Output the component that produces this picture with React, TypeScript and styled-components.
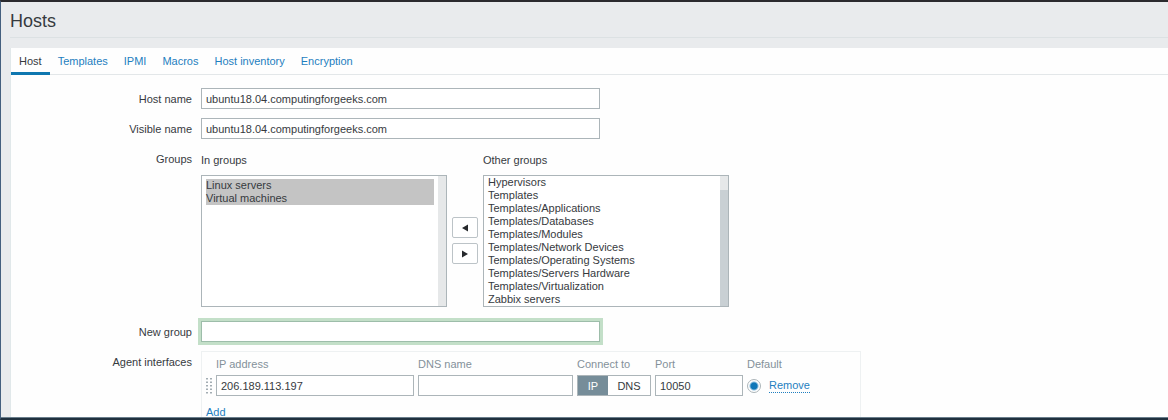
import React from "react";
import styled, { createGlobalStyle } from "styled-components";

const GlobalStyle = createGlobalStyle`
  *, *::before, *::after { box-sizing: border-box; }
  body {
    margin: 0;
    background: #e9ebed;
    color: #363a3e;
    font-family: "Liberation Sans", Arial, sans-serif;
    font-size: 11px;
    line-height: 14px;
  }
  button, input, select { font: inherit; color: inherit; margin: 0; }
`;

const Screen = styled.div`
  display: flex;
  flex-direction: column;
  height: 100vh;
  overflow: hidden;
  border-top: 2px solid #2b2a2e;
  border-left: 1px solid #45607f;
  border-bottom: 2px solid #1f303e;
`;

const Viewport = styled.div`
  flex: 1;
  min-height: 0;
  overflow: hidden;
  padding-left: 9px;
  border-bottom: 1px solid #6a7e8c;
`;

const Header = styled.header`
  padding: 9px 0 6px;
  border-bottom: 1px solid #dce1e3;
  margin-bottom: 10px;
`;

const Title = styled.h1`
  margin: 0;
  font-size: 18px;
  line-height: 20px;
  font-weight: 400;
`;

const Panel = styled.main`
  background: #fefefe;
  border-left: 1px solid #e1e8ea;
`;

const Tabs = styled.nav`
  display: flex;
  border-bottom: 1px solid #e3e7e9;
`;

const Tab = styled.a<{ $active?: boolean }>`
  padding: 6px 8px 4px;
  margin-bottom: -1px;
  border-bottom: 3px solid ${(p) => (p.$active ? "#0f77b0" : "transparent")};
  color: ${(p) => (p.$active ? "#363a3e" : "#1f7fc0")};
  text-decoration: none;
`;

const Form = styled.form`
  display: grid;
  grid-template-columns: 181px minmax(0, 1fr);
  column-gap: 9px;
  row-gap: 9px;
  padding: 13px 0 20px;
`;

const Label = styled.label`
  padding-top: 4px;
  text-align: right;
`;

const TextInput = styled.input<{ $width?: number }>`
  display: block;
  width: ${(p) => p.$width ?? 399}px;
  max-width: 100%;
  height: 21px;
  padding: 0 4px;
  border: 1px solid #acb5b9;
  border-radius: 0;
  background: #fff;
  outline: none;
`;

const FocusedInput = styled(TextInput)`
  border-color: #9dbdaa;
  box-shadow: 0 0 0 3px #c3dfc8;
`;

const Groups = styled.div`
  display: flex;
  gap: 5px;
  padding-bottom: 5px;
`;

const GroupColumn = styled.div`
  display: flex;
  flex-direction: column;
  width: 246px;
`;

const GroupLabel = styled.label`
  padding: 5px 0 8px;
`;

const ListFrame = styled.div`
  display: flex;
  height: 132px;
  border: 1px solid #acb5b9;
  background: #fff;
`;

const ListBox = styled.select<{ $inset: number }>`
  flex: 1;
  min-width: 0;
  padding: ${(p) => p.$inset}px 4px 0;
  border: 0;
  border-radius: 0;
  background: transparent;
  outline: none;
  overflow: hidden;
`;

const Option = styled.option`
  height: 13px;
  min-height: 0;
  padding: 0;
  line-height: 13px;
  &:checked {
    color: #363a3e;
    background: #c4c4c4 linear-gradient(#c4c4c4, #c4c4c4);
  }
`;

const Track = styled.div<{ $thumb?: boolean }>`
  width: 8px;
  padding-top: 14px;
  background: #e6e8e9;
  &::before {
    content: "";
    display: block;
    height: 100%;
    background: ${(p) => (p.$thumb ? "#c9d0d4" : "transparent")};
  }
`;

const MoveButtons = styled.div`
  display: flex;
  flex-direction: column;
  gap: 5px;
  padding-top: 69px;
`;

const MoveButton = styled.button`
  display: flex;
  align-items: center;
  justify-content: center;
  width: 26px;
  height: 21px;
  padding: 0;
  border: 1px solid #bcc3c7;
  border-radius: 2px;
  background: #fff;
`;

const Interfaces = styled.div`
  width: 660px;
  max-width: 100%;
  padding: 2px 4px 4px;
  border: 1px solid #eef1f2;
`;

const Table = styled.table`
  border-collapse: collapse;
`;

const HeadCell = styled.th`
  padding: 3px 4px 4px 0;
  color: #84919a;
  font-weight: 400;
  text-align: left;
`;

const Cell = styled.td`
  padding: 0 4px 0 0;
`;

const HandleCell = styled.td`
  width: 10px;
  padding: 0;
  svg { display: block; }
`;

const Segments = styled.div`
  display: flex;
  width: 74px;
  height: 21px;
  border: 1px solid #acb5b9;
`;

const Segment = styled.label<{ $on?: boolean }>`
  display: flex;
  align-items: center;
  justify-content: center;
  flex: ${(p) => (p.$on ? "0 0 30px" : "1")};
  background: ${(p) => (p.$on ? "#768d99" : "#fff")};
  color: ${(p) => (p.$on ? "#fff" : "#363a3e")};
  input {
    appearance: none;
    width: 0;
    height: 0;
  }
`;

const DefaultRadio = styled.input`
  display: block;
  appearance: none;
  width: 14px;
  height: 14px;
  border: 1px solid #acb5b9;
  border-radius: 50%;
  background: radial-gradient(circle, #0f77b8 3px, #fff 5px);
`;

const DefaultGroup = styled.div`
  display: flex;
  align-items: center;
  gap: 8px;
`;

const LinkButton = styled.button<{ $dotted?: boolean }>`
  padding: 0;
  border: 0;
  border-bottom: ${(p) => (p.$dotted ? "1px dotted #1f7fc0" : "0")};
  background: none;
  color: #1f7fc0;
`;

const AddRow = styled.div`
  padding-top: 9px;
`;

const tabs = ["Host", "Templates", "IPMI", "Macros", "Host inventory", "Encryption"];
const inGroups = ["Linux servers", "Virtual machines"];
const otherGroups = [
  "Hypervisors",
  "Templates",
  "Templates/Applications",
  "Templates/Databases",
  "Templates/Modules",
  "Templates/Network Devices",
  "Templates/Operating Systems",
  "Templates/Servers Hardware",
  "Templates/Virtualization",
  "Zabbix servers",
];

const DragHandle = () => (
  <svg width="6" height="16" viewBox="0 0 6 16" fill="#a3adb3" aria-hidden="true">
    {[0, 3.5, 7, 10.5, 14].map((y) => (
      <React.Fragment key={y}>
        <rect x="0" y={y} width="2" height="1.5" />
        <rect x="4" y={y} width="2" height="1.5" />
      </React.Fragment>
    ))}
  </svg>
);

export default function App() {
  return (
    <>
      <GlobalStyle />
      <Screen>
        <Viewport>
          <Header>
            <Title>Hosts</Title>
          </Header>
          <Panel>
            <Tabs>
              {tabs.map((t, i) => (
                <Tab key={t} href="#" $active={i === 0}>
                  {t}
                </Tab>
              ))}
            </Tabs>
            <Form onSubmit={(e) => e.preventDefault()}>
              <Label htmlFor="host">Host name</Label>
              <TextInput id="host" defaultValue="ubuntu18.04.computingforgeeks.com" />

              <Label htmlFor="visible">Visible name</Label>
              <TextInput id="visible" defaultValue="ubuntu18.04.computingforgeeks.com" />

              <Label as="span">Groups</Label>
              <Groups>
                <GroupColumn>
                  <GroupLabel htmlFor="in-groups">In groups</GroupLabel>
                  <ListFrame>
                    <ListBox id="in-groups" multiple $inset={3} defaultValue={inGroups}>
                      {inGroups.map((g) => (
                        <Option key={g}>{g}</Option>
                      ))}
                    </ListBox>
                    <Track />
                  </ListFrame>
                </GroupColumn>
                <MoveButtons>
                  <MoveButton type="button" aria-label="Add to host groups">
                    <svg width="6" height="8" viewBox="0 0 6 8" fill="#26292c">
                      <path d="M6 0.5v7L0 4z" />
                    </svg>
                  </MoveButton>
                  <MoveButton type="button" aria-label="Remove from host groups">
                    <svg width="6" height="8" viewBox="0 0 6 8" fill="#26292c">
                      <path d="M0 0.5v7L6 4z" />
                    </svg>
                  </MoveButton>
                </MoveButtons>
                <GroupColumn>
                  <GroupLabel htmlFor="other-groups">Other groups</GroupLabel>
                  <ListFrame>
                    <ListBox id="other-groups" multiple $inset={0}>
                      {otherGroups.map((g) => (
                        <Option key={g}>{g}</Option>
                      ))}
                    </ListBox>
                    <Track $thumb />
                  </ListFrame>
                </GroupColumn>
              </Groups>

              <Label htmlFor="new-group">New group</Label>
              <FocusedInput id="new-group" />

              <Label as="span">Agent interfaces</Label>
              <Interfaces>
                <Table>
                  <thead>
                    <tr>
                      <HandleCell />
                      <HeadCell>IP address</HeadCell>
                      <HeadCell>DNS name</HeadCell>
                      <HeadCell>Connect to</HeadCell>
                      <HeadCell>Port</HeadCell>
                      <HeadCell>Default</HeadCell>
                    </tr>
                  </thead>
                  <tbody>
                    <tr>
                      <HandleCell>
                        <DragHandle />
                      </HandleCell>
                      <Cell>
                        <TextInput $width={198} aria-label="IP address" defaultValue="206.189.113.197" />
                      </Cell>
                      <Cell>
                        <TextInput $width={155} aria-label="DNS name" />
                      </Cell>
                      <Cell>
                        <Segments>
                          <Segment $on>
                            <input type="radio" name="connect" defaultChecked />
                            IP
                          </Segment>
                          <Segment>
                            <input type="radio" name="connect" />
                            DNS
                          </Segment>
                        </Segments>
                      </Cell>
                      <Cell>
                        <TextInput $width={88} aria-label="Port" defaultValue="10050" />
                      </Cell>
                      <Cell>
                        <DefaultGroup>
                          <DefaultRadio type="radio" name="default" aria-label="Default" defaultChecked />
                          <LinkButton type="button" $dotted>
                            Remove
                          </LinkButton>
                        </DefaultGroup>
                      </Cell>
                    </tr>
                  </tbody>
                </Table>
                <AddRow>
                  <LinkButton type="button">Add</LinkButton>
                </AddRow>
              </Interfaces>
            </Form>
          </Panel>
        </Viewport>
      </Screen>
    </>
  );
}
